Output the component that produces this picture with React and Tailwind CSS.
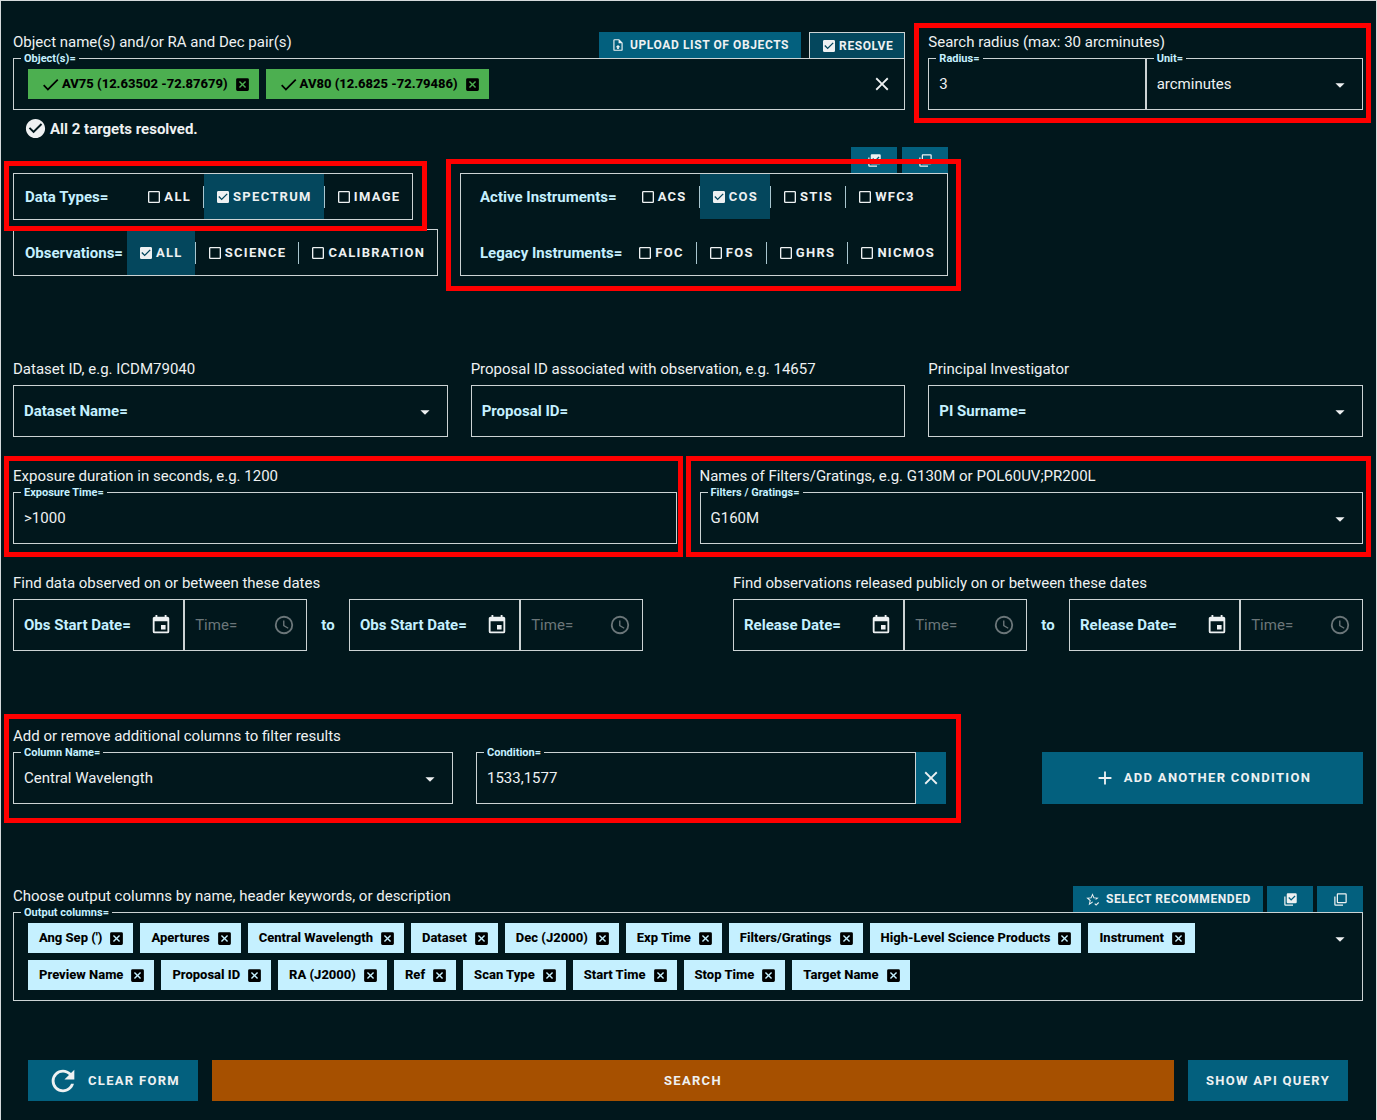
import { useId, useState } from "react";

const ICONS = {
  close: "M19,6.41L17.59,5L12,10.59L6.41,5L5,6.41L10.59,12L5,17.59L6.41,19L12,13.41L17.59,19L19,17.59L13.41,12L19,6.41Z",
  menuDown: "M7,10L12,15L17,10H7Z",
  boxMarked: "M10,17L5,12L6.41,10.58L10,14.17L17.59,6.58L19,8M19,3H5C3.89,3 3,3.89 3,5V19A2,2 0 0,0 5,21H19A2,2 0 0,0 21,19V5C21,3.89 20.1,3 19,3Z",
  boxBlank: "M19,3H5C3.89,3 3,3.89 3,5V19A2,2 0 0,0 5,21H19A2,2 0 0,0 21,19V5C21,3.89 20.1,3 19,3M19,5V19H5V5H19Z",
  closeBox: "M19,3H5A2,2 0 0,0 3,5V19A2,2 0 0,0 5,21H19A2,2 0 0,0 21,19V5A2,2 0 0,0 19,3M15.6,17L12,13.4L8.4,17L7,15.6L10.6,12L7,8.4L8.4,7L12,10.6L15.6,7L17,8.4L13.4,12L17,15.6L15.6,17Z",
  check: "M21,7L9,19L3.5,13.5L4.91,12.09L9,16.17L19.59,5.59L21,7Z",
  checkCircle: "M12 2C6.5 2 2 6.5 2 12S6.5 22 12 22 22 17.5 22 12 17.5 2 12 2M10 17L5 12L6.41 10.59L10 14.17L17.59 6.58L19 8L10 17Z",
  calendar: "M19,19H5V8H19M16,1V3H8V1H6V3H5C3.89,3 3,3.89 3,5V19A2,2 0 0,0 5,21H19A2,2 0 0,0 21,19V5C21,3.89 20.1,3 19,3H18V1M17,12H12V17H17V12Z",
  clock: "M12,20A8,8 0 0,0 20,12A8,8 0 0,0 12,4A8,8 0 0,0 4,12A8,8 0 0,0 12,20M12,2A10,10 0 0,1 22,12A10,10 0 0,1 12,22C6.47,22 2,17.5 2,12A10,10 0 0,1 12,2M12.5,7V12.25L17,14.92L16.25,16.15L11,13V7H12.5Z",
  multiMarked: "M22,16A2,2 0 0,1 20,18H8C6.89,18 6,17.1 6,16V4C6,2.89 6.89,2 8,2H20A2,2 0 0,1 22,4V16M16,20V22H4A2,2 0 0,1 2,20V7H4V20H16M13,14L20,7L18.59,5.59L13,11.17L9.91,8.09L8.5,9.5L13,14Z",
  multiBlank: "M20,16V4H8V16H20M22,16A2,2 0 0,1 20,18H8C6.89,18 6,17.1 6,16V4C6,2.89 6.89,2 8,2H20A2,2 0 0,1 22,4V16M16,20V22H4A2,2 0 0,1 2,20V7H4V20H16Z",
  plus: "M19,13H13V19H11V13H5V11H11V5H13V11H19V13Z",
  refresh: "M17.65,6.35C16.2,4.9 14.21,4 12,4A8,8 0 0,0 4,12A8,8 0 0,0 12,20C15.73,20 18.84,17.45 19.73,14H17.65C16.83,16.33 14.61,18 12,18A6,6 0 0,1 6,12A6,6 0 0,1 12,6C13.66,6 15.14,6.69 16.22,7.78L13,11H20V4L17.65,6.35Z",
  fileUpload: "M14,2L20,8V20A2,2 0 0,1 18,22H6A2,2 0 0,1 4,20V4A2,2 0 0,1 6,2H14M18,20V9H13V4H6V20H18M12,12L16,16H13.5V19H10.5V16H8L12,12Z",
  starCheck: "M12,15.39L8.24,17.66L9.23,13.38L5.91,10.5L10.29,10.13L12,6.09L13.71,10.13L18.09,10.5L15.5,12.75C16.3,12.3 17.3,12.05 18.2,12.05L22,9.24L14.81,8.63L12,2L9.19,8.63L2,9.24L7.45,13.97L5.82,21L12,17.27C12.1,16.6 12.4,15.9 12.7,15.8M17.75,22.16L15,19.16L16.16,18L17.75,19.59L21.34,16L22.5,17.41L17.75,22.16Z",
};

function Icon({ name, className = "size-4" }) {
  return (
    <svg viewBox="0 0 24 24" className={"shrink-0 fill-current " + className} aria-hidden="true">
      <path fillRule="evenodd" d={ICONS[name]} />
    </svg>
  );
}

function Highlight({ className }) {
  return <div aria-hidden="true" className={"pointer-events-none absolute z-20 border-5 border-[#ff0000] " + className} />;
}

function Caption({ children }) {
  return <p className="h-[26px] text-[15px] leading-5 whitespace-nowrap">{children}</p>;
}

const BOX = "relative border border-[#ccd3d4]";
const FLOATING = "absolute left-[7px] -top-2 z-10 bg-[#01171c] px-[3px] text-[11px] leading-4 font-bold text-[#c5f0ff]";
const RESTING = "pointer-events-none absolute left-2.5 top-[15px] z-10 text-[15px] leading-5 font-bold text-[#c5f0ff]";
const CONTROL = "block h-[50px] w-full appearance-none bg-transparent px-2.5 text-[15px] leading-5 text-[#eef1f2] outline-none";

function TextField({ label, initial = "", className = "" }) {
  const id = useId();
  const [value, setValue] = useState(initial);
  return (
    <div className={BOX + " " + className}>
      <label htmlFor={id} className={value ? FLOATING : RESTING}>{label}</label>
      <input id={id} type="text" value={value} onChange={(e) => setValue(e.target.value)} className={CONTROL} />
    </div>
  );
}

function SelectField({ label, options, initial = "", className = "" }) {
  const id = useId();
  const [value, setValue] = useState(initial);
  return (
    <div className={BOX + " " + className}>
      <label htmlFor={id} className={value ? FLOATING : RESTING}>{label}</label>
      <select id={id} value={value} onChange={(e) => setValue(e.target.value)} className={CONTROL}>
        {options.map((o) => <option key={o} value={o} className="bg-[#01171c]">{o}</option>)}
      </select>
      <Icon name="menuDown" className="pointer-events-none absolute top-[15px] right-[11px] size-[22px]" />
    </div>
  );
}

function DateTime({ label }) {
  const dateId = useId();
  const timeId = useId();
  const [date, setDate] = useState("");
  return (
    <div className="flex min-w-0 flex-1">
      <div className={BOX + " flex flex-[7] items-center"}>
        <label htmlFor={dateId} className={date ? FLOATING : RESTING}>{label}</label>
        <input id={dateId} type="text" value={date} onChange={(e) => setDate(e.target.value)} className={CONTROL + " min-w-0"} />
        <button type="button" aria-label={"Pick " + label.replace("=", "")} className="mr-[11px]">
          <Icon name="calendar" className="size-[22px]" />
        </button>
      </div>
      <div className={BOX + " flex flex-[5] items-center text-[#6b7679]"}>
        <label htmlFor={timeId} className="pointer-events-none absolute top-[15px] left-2.5 text-[15px] leading-5">Time=</label>
        <input id={timeId} type="text" disabled className={CONTROL + " min-w-0"} />
        <Icon name="clock" className="mr-[11px] size-[22px]" />
      </div>
    </div>
  );
}

function DateRange({ caption, label }) {
  return (
    <div>
      <Caption>{caption}</Caption>
      <div className="flex items-center">
        <DateTime label={label} />
        <span className="w-[42px] text-center text-[15px] leading-5 font-bold text-[#c5f0ff]">to</span>
        <DateTime label={label} />
      </div>
    </div>
  );
}

function ToggleGroup({ label, items, initial, labelClass = "", className = "" }) {
  const [checked, setChecked] = useState(initial);
  return (
    <div role="group" aria-label={label} className={"flex h-[45px] items-stretch " + className}>
      <span className={"self-center text-[15px] leading-5 font-bold whitespace-nowrap text-[#c5f0ff] " + labelClass}>{label}</span>
      {items.map((item, i) => {
        const on = checked === item;
        return (
          <div key={item} className="flex items-center">
            {i > 0 && <span className="h-[22px] w-px bg-[#a9c6cf]" />}
            <label className={"relative flex h-full items-center gap-0.5 pr-3 pl-[11px] text-[13px] leading-5 font-bold tracking-widest " + (on ? "bg-[#04475d]" : "")}>
              <input type="checkbox" checked={on} onChange={() => setChecked(item)} className="absolute inset-0 cursor-pointer opacity-0" />
              <Icon name={on ? "boxMarked" : "boxBlank"} />
              {item}
            </label>
          </div>
        );
      })}
    </div>
  );
}

const TAB = "flex h-[26px] items-center justify-center bg-[#03607e] text-[12px] leading-4 font-bold tracking-wider whitespace-nowrap";

function SelectionTabs() {
  return (
    <>
      <button type="button" aria-label="Select all" className={TAB + " w-[46px]"}><Icon name="multiMarked" className="size-[15px]" /></button>
      <button type="button" aria-label="Select none" className={TAB + " w-[46px]"}><Icon name="multiBlank" className="size-[15px]" /></button>
    </>
  );
}

function Chip({ children, tone, marked, onRemove }) {
  return (
    <span className={"flex h-[30px] items-center gap-[6px] pr-2 pl-[11px] text-[13px] leading-5 font-extrabold whitespace-nowrap text-black " + tone}>
      <span className="flex items-center">
        {marked && <Icon name="check" className="mx-px size-[21px]" />}
        {children}
      </span>
      <button type="button" aria-label={"Remove " + children} onClick={onRemove}><Icon name="closeBox" className="size-[17px]" /></button>
    </span>
  );
}

const COLUMNS = ["Ang Sep (')", "Apertures", "Central Wavelength", "Dataset", "Dec (J2000)", "Exp Time", "Filters/Gratings", "High-Level Science Products", "Instrument", "Preview Name", "Proposal ID", "RA (J2000)", "Ref", "Scan Type", "Start Time", "Stop Time", "Target Name"];

export default function App() {
  const [targets, setTargets] = useState(["AV75 (12.63502 -72.87679)", "AV80 (12.6825 -72.79486)"]);
  const [columns, setColumns] = useState(COLUMNS);
  return (
    <form
      onSubmit={(e) => e.preventDefault()}
      className="min-h-screen border-x border-t border-[#d5dadb] bg-[#01171c] pt-[31px] pr-[13px] pb-[18px] pl-3 text-[#eef1f2]"
      style={{ fontFamily: 'Roboto, "Liberation Sans", sans-serif' }}
    >
      <div className="grid grid-cols-3 gap-[23px]">
        <div className="col-span-2">
          <div className="flex items-start justify-between">
            <Caption>Object name(s) and/or RA and Dec pair(s)</Caption>
            <div className="flex gap-2">
              <button type="button" className={TAB + " gap-[5px] px-3"}><Icon name="fileUpload" className="size-[14px]" />UPLOAD LIST OF OBJECTS</button>
              <button type="button" className="flex h-[26px] items-center gap-0.5 border border-b-0 border-[#ccd3d4] bg-[#04475d] px-[11px] text-[12px] leading-4 font-bold tracking-wider"><Icon name="boxMarked" />RESOLVE</button>
            </div>
          </div>
          <div className={BOX + " flex min-h-[52px] items-center justify-between py-2.5 pr-[11px] pl-[14px]"}>
            <span className={FLOATING}>Object(s)=</span>
            <div className="flex flex-wrap gap-[7px]">
              {targets.map((t) => (
                <Chip key={t} marked tone="bg-[#4caf50]" onRemove={() => setTargets(targets.filter((x) => x !== t))}>{t}</Chip>
              ))}
            </div>
            <button type="button" aria-label="Clear objects" onClick={() => setTargets([])}><Icon name="close" className="size-[22px]" /></button>
          </div>
          <p className="mt-[7px] flex items-center gap-[3px] pl-[11px] text-[15px] leading-[22px] font-bold">
            <Icon name="checkCircle" className="size-[23px]" />All 2 targets resolved.
          </p>
        </div>
        <div className="relative">
          <Highlight className="-top-[9px] -right-2 -left-[14px] h-[100px]" />
          <Caption>Search radius (max: 30 arcminutes)</Caption>
          <div className="flex">
            <TextField label="Radius=" initial="3" className="flex-1" />
            <SelectField label="Unit=" initial="arcminutes" options={["arcminutes", "arcseconds", "degrees"]} className="flex-1" />
          </div>
        </div>
      </div>

      <div className="mt-[7px] flex items-end gap-[23px]">
        <div className="flex w-[424px] flex-col items-start gap-[9px]">
          <div className="relative">
            <Highlight className="-top-[12px] -right-[14px] -bottom-[11px] -left-[9px]" />
            <ToggleGroup label="Data Types=" items={["ALL", "SPECTRUM", "IMAGE"]} initial="SPECTRUM" labelClass="mr-[27px]" className="box-content border border-[#ccd3d4] pl-[11px]" />
          </div>
          <ToggleGroup label="Observations=" items={["ALL", "SCIENCE", "CALIBRATION"]} initial="ALL" labelClass="mr-1" className="box-content border border-[#ccd3d4] pl-[11px]" />
        </div>
        <div>
          <div className="flex justify-end gap-[5px]"><SelectionTabs /></div>
          <div className={BOX + " flex w-[488px] flex-col gap-[11px] pl-[19px]"}>
            <Highlight className="-top-[15px] -right-[14px] -bottom-4 -left-[15px]" />
            <ToggleGroup label="Active Instruments=" items={["ACS", "COS", "STIS", "WFC3"]} initial="COS" labelClass="mr-3" />
            <ToggleGroup label="Legacy Instruments=" items={["FOC", "FOS", "GHRS", "NICMOS"]} initial="" labelClass="mr-1" />
          </div>
        </div>
      </div>

      <div className="mt-[83px] grid grid-cols-3 gap-[23px]">
        <div>
          <Caption>Dataset ID, e.g. ICDM79040</Caption>
          <SelectField label="Dataset Name=" options={["", "ICDM79040"]} />
        </div>
        <div>
          <Caption>Proposal ID associated with observation, e.g. 14657</Caption>
          <TextField label="Proposal ID=" />
        </div>
        <div>
          <Caption>Principal Investigator</Caption>
          <SelectField label="PI Surname=" options={["", "Roman-Duval"]} />
        </div>
      </div>

      <div className="mt-[29px] grid grid-cols-2 gap-[23px]">
        <div className="relative">
          <Highlight className="-top-2.5 -right-1.5 -bottom-[13px] -left-[9px]" />
          <Caption>Exposure duration in seconds, e.g. 1200</Caption>
          <TextField label="Exposure Time=" initial=">1000" />
        </div>
        <div className="relative">
          <Highlight className="-top-2.5 -right-2 -bottom-[13px] -left-[14px]" />
          <Caption>Names of Filters/Gratings, e.g. G130M or POL60UV;PR200L</Caption>
          <SelectField label="Filters / Gratings=" initial="G160M" options={["G160M", "G130M"]} />
        </div>
      </div>

      <div className="mt-[29px] grid grid-cols-2 gap-[90px]">
        <DateRange caption="Find data observed on or between these dates" label="Obs Start Date=" />
        <DateRange caption="Find observations released publicly on or between these dates" label="Release Date=" />
      </div>

      <div className="mt-[75px] flex items-end gap-24">
        <div className="relative min-w-0 flex-1">
          <Highlight className="-top-3 -right-[15px] -bottom-[19px] -left-[9px]" />
          <Caption>Add or remove additional columns to filter results</Caption>
          <div className="flex">
            <SelectField label="Column Name=" initial="Central Wavelength" options={["Central Wavelength", "Exp Time"]} className="mr-[23px] flex-1" />
            <TextField label="Condition=" initial="1533,1577" className="flex-1" />
            <button type="button" aria-label="Remove condition" className="flex w-[30px] items-center justify-center bg-[#03607e]"><Icon name="close" className="size-[22px]" /></button>
          </div>
        </div>
        <button type="button" className="flex h-[52px] w-[321px] items-center justify-center gap-2 bg-[#03607e] text-[13px] leading-5 font-bold tracking-widest">
          <Icon name="plus" className="size-[22px]" />ADD ANOTHER CONDITION
        </button>
      </div>

      <div className="mt-[82px]">
        <div className="flex items-start justify-between">
          <Caption>Choose output columns by name, header keywords, or description</Caption>
          <div className="flex gap-1">
            <button type="button" className={TAB + " gap-1.5 px-3"}><Icon name="starCheck" className="size-[15px]" />SELECT RECOMMENDED</button>
            <SelectionTabs />
          </div>
        </div>
        <div className={BOX + " py-2.5 pr-12 pl-[14px]"}>
          <span className={FLOATING}>Output columns=</span>
          <div className="flex flex-wrap gap-[7px]">
            {columns.map((c) => (
              <Chip key={c} tone="bg-[#c5f0ff]" onRemove={() => setColumns(columns.filter((x) => x !== c))}>{c}</Chip>
            ))}
          </div>
          <button type="button" aria-label="Show columns" className="absolute top-[15px] right-[11px]"><Icon name="menuDown" className="size-[22px]" /></button>
        </div>
      </div>

      <div className="mt-[59px] flex gap-[14px] px-[15px]">
        <button type="reset" className="flex h-[41px] items-center gap-2 bg-[#03607e] px-[18px] text-[13px] leading-5 font-bold tracking-widest"><Icon name="refresh" className="size-[34px]" />CLEAR FORM</button>
        <button type="submit" className="h-[41px] flex-1 bg-[#a65000] text-[13px] leading-5 font-bold tracking-widest">SEARCH</button>
        <button type="button" className="h-[41px] bg-[#03607e] px-[18px] text-[13px] leading-5 font-bold tracking-widest">SHOW API QUERY</button>
      </div>
    </form>
  );
}
